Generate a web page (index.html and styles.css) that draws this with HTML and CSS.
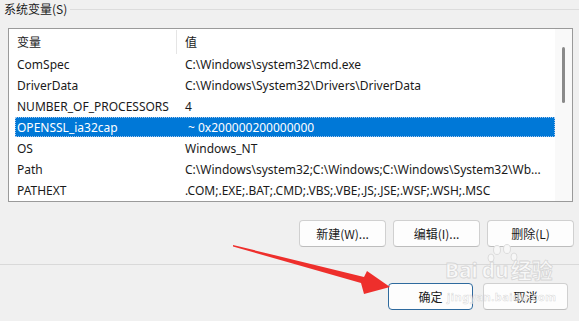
FILE: index.html
```html
<!DOCTYPE html>
<html>
<head>
<meta charset="utf-8">
<link rel="stylesheet" href="styles.css">
</head>
<body>
<div class="dialog">
  <div class="group-head">
    <span class="group-label">系统变量(S)</span>
    <span class="group-line"></span>
  </div>
  <div class="list">
    <div class="table">
      <div class="row header">
        <div class="c1">变量</div>
        <div class="c2">值</div>
      </div>
      <div class="row"><div class="c1">ComSpec</div><div class="c2">C:\Windows\system32\cmd.exe</div></div>
      <div class="row"><div class="c1">DriverData</div><div class="c2">C:\Windows\System32\Drivers\DriverData</div></div>
      <div class="row"><div class="c1">NUMBER_OF_PROCESSORS</div><div class="c2">4</div></div>
      <div class="row selected"><div class="c1">OPENSSL_ia32cap</div><div class="c2 shift">~ 0x200000200000000</div></div>
      <div class="row"><div class="c1">OS</div><div class="c2">Windows_NT</div></div>
      <div class="row"><div class="c1">Path</div><div class="c2">C:\Windows\system32;C:\Windows;C:\Windows\System32\Wb...</div></div>
      <div class="row"><div class="c1">PATHEXT</div><div class="c2">.COM;.EXE;.BAT;.CMD;.VBS;.VBE;.JS;.JSE;.WSF;.WSH;.MSC</div></div>
    </div>
    <div class="scrollbar"><div class="thumb"></div></div>
  </div>
  <div class="btn-row">
    <button class="btn">新建(W)...</button>
    <button class="btn">编辑(I)...</button>
    <button class="btn">删除(L)</button>
  </div>
  <div class="separator"></div>
  <div class="btn-row bottom">
    <button class="btn default">确定</button>
    <button class="btn">取消</button>
  </div>
</div>

<div class="watermark">
  <svg class="paw" width="36" height="26" viewBox="0 0 36 26">
    <g fill="#f7f7f7" stroke="#dcdcdc" stroke-width="1">
      <ellipse cx="12" cy="6" rx="3.5" ry="4.5"/>
      <ellipse cx="22" cy="5" rx="3.5" ry="4.5"/>
      <ellipse cx="6" cy="14" rx="3" ry="4"/>
      <ellipse cx="29" cy="13" rx="3" ry="4"/>
    </g>
  </svg>
  <div class="wm-main">Bai<span class="du">du</span>经验</div>
  <div class="wm-sub">jingyan.baidu.com</div>
</div>

<svg class="arrow" width="579" height="321" viewBox="0 0 579 321">
  <polygon points="233,245 364,277 367,271 390,287 364,294 361,283 233,246.5" fill="#ee2f2c"/>
</svg>
</body>
</html>
```

FILE: styles.css
```css
html, body {
  margin: 0;
  padding: 0;
}
body {
  width: 579px;
  height: 321px;
  background: #f0f0f0;
  font-family: "Noto Sans", "Noto Sans CJK SC", sans-serif;
  font-size: 12px;
  color: #1a1a1a;
  overflow: hidden;
  position: relative;
}
.dialog {
  display: flex;
  flex-direction: column;
}
.group-head {
  display: flex;
  align-items: center;
  height: 18px;
  padding-left: 4px;
}
.group-label {
  line-height: 18px;
  font-family: "Noto Sans CJK SC", sans-serif;
}
.group-line {
  flex: 1;
  height: 0;
  border-top: 1px solid #dcdcdc;
  margin-left: 3px;
}
.list {
  margin: 10px 0 0 8px;
  width: 563px;
  height: 172px;
  border: 1px solid #9a9a9a;
  background: #ffffff;
  display: flex;
}
.table {
  width: 546px;
  display: flex;
  flex-direction: column;
}
.row {
  display: flex;
  height: 21px;
  align-items: center;
  margin-left: 6px;
  width: 540px;
  box-sizing: border-box;
  white-space: nowrap;
}
.row.header {
  height: 25px;
}
.row.header .c1 {
  border-right: 1px solid #e5e5e5;
  height: 24px;
  line-height: 24px;
}
.header .c1, .header .c2 {
  font-family: "Noto Sans CJK SC", sans-serif;
}
.c1 {
  width: 162px;
  padding-left: 2px;
  box-sizing: border-box;
}
.c2 {
  padding-left: 8px;
}
.c2.shift {
  padding-left: 11px;
}
.row.selected {
  background: #0078d7;
  color: #ffffff;
  height: 20px;
  margin-bottom: 1px;
  outline: 1px dotted #a8c8ec;
  outline-offset: -1px;
}
.scrollbar {
  width: 17px;
  background: #f9f9f9;
  position: relative;
  display: flex;
  justify-content: center;
  padding-top: 18px;
  box-sizing: border-box;
}
.thumb {
  width: 3px;
  height: 56px;
  border-radius: 2px;
  background: #8a8a8a;
}
.btn-row {
  display: flex;
  justify-content: flex-end;
  gap: 7px;
  margin-top: 18px;
  padding-right: 5px;
}
.btn {
  width: 87px;
  height: 27px;
  border: 1px solid #d0d0d0;
  border-bottom-color: #bdbdbd;
  border-radius: 4px;
  background: #fdfdfd;
  font-family: "Noto Sans CJK SC", sans-serif;
  font-size: 12px;
  color: #1a1a1a;
  padding: 0;
}
.separator {
  margin-top: 17px;
  height: 0;
  border-top: 1px solid #d9d9d9;
}
.btn-row.bottom {
  margin-top: 18px;
  gap: 10px;
  padding-right: 11px;
}
.btn-row.bottom .btn {
  width: 85px;
}
.btn.default {
  border: 1px solid #2e6a9e;
}
.watermark {
  position: absolute;
  left: 445px;
  top: 244px;
  width: 115px;
  height: 64px;
  color: rgba(255, 255, 255, 0.6);
  pointer-events: none;
}
.paw {
  position: absolute;
  left: 40px;
  top: 0;
}
.wm-main {
  position: absolute;
  top: 13px;
  left: 0;
  font-family: "Noto Sans", "Noto Sans CJK SC", sans-serif;
  font-size: 21px;
  font-weight: bold;
  line-height: 26px;
  -webkit-text-stroke: 0.8px rgba(200, 200, 200, 0.7);
  white-space: nowrap;
}
.du {
  margin-left: 4px;
  margin-right: 2px;
}
.wm-sub {
  position: absolute;
  top: 46px;
  left: 2px;
  font-size: 11px;
  line-height: 14px;
  font-weight: bold;
  -webkit-text-stroke: 0.5px rgba(200, 200, 200, 0.7);
  white-space: nowrap;
  letter-spacing: 0.5px;
}
.arrow {
  position: absolute;
  left: 0;
  top: 0;
  pointer-events: none;
}
```
